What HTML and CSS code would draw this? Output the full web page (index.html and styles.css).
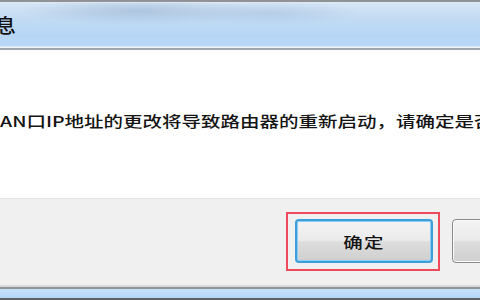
FILE: index.html
```html
<!DOCTYPE html>
<html lang="zh-CN">
<head>
<meta charset="utf-8">
<title>信息</title>
<link rel="stylesheet" href="styles.css">
</head>
<body>
<div class="window">
  <div class="frame-top"></div>
  <div class="titlebar">
    <span class="title">息</span>
  </div>
  <div class="title-sep"></div>
  <div class="content">
    <p class="message">AN口IP地址的更改将导致路由器的重新启动，请确定是否</p>
  </div>
  <div class="footer">
    <div class="highlight">
      <button class="btn btn-default"><span class="btn-label">确定</span></button>
    </div>
    <button class="btn" aria-label="取消"></button>
  </div>
  <div class="frame-bottom">
    <div class="fb-light"></div>
    <div class="fb-gray"></div>
    <div class="fb-blue"></div>
    <div class="fb-dark"></div>
  </div>
</div>
</body>
</html>
```

FILE: styles.css
```css
* { box-sizing: border-box; }
html, body {
  margin: 0;
  padding: 0;
  width: 480px;
  height: 300px;
  overflow: hidden;
  background: #ffffff;
}
body {
  font-family: "Noto Sans CJK SC", "Noto Sans", sans-serif;
  color: #1e1e1e;
}
.window {
  display: flex;
  flex-direction: column;
  width: 480px;
  height: 300px;
  overflow: hidden;
}
.frame-top {
  height: 3px;
  border-top: 2px solid #8f9397;
  background: #dfe9f3;
  flex: none;
}
.titlebar {
  height: 43px;
  flex: none;
  display: flex;
  align-items: center;
  background:
    radial-gradient(ellipse 120px 14px at 140px 8px, rgba(150,175,205,0.55), rgba(150,175,205,0) 100%),
    radial-gradient(ellipse 90px 12px at 270px 10px, rgba(160,185,215,0.45), rgba(160,185,215,0) 100%),
    linear-gradient(to bottom, #d6e6f6 0%, #c3dbf3 35%, #b7d6f6 75%, #b9d8f8 100%);
  overflow: hidden;
}
.title {
  display: inline-block;
  font-size: 19px;
  font-weight: 500;
  line-height: 22px;
  margin-left: -5px;
  transform: scaleX(1.1);
  transform-origin: left center;
  color: #111;
}
.title-sep {
  height: 4px;
  flex: none;
  border-top: 1px solid #d9e8f7;
  border-bottom: 2px solid #a1a6ab;
  background: #eef3f8;
}
.content {
  height: 148px;
  flex: none;
  background: #ffffff;
  padding-top: 61px;
  overflow: hidden;
}
.message {
  margin: 0;
  font-size: 15px;
  font-weight: 500;
  line-height: 20px;
  white-space: nowrap;
  transform: scaleX(1.3);
  transform-origin: left center;
  color: #141414;
}
.footer {
  height: 87px;
  flex: none;
  background: #f0f0f0;
  border-top: 1px solid #e4e4e4;
  display: flex;
  align-items: flex-start;
  gap: 12px;
  padding-left: 286px;
  padding-top: 13px;
  overflow: hidden;
}
.highlight {
  flex: none;
  width: 154px;
  height: 59px;
  border: 2px solid #ee4a5c;
  padding: 5px 5px 6px 7px;
}
.btn {
  flex: none;
  width: 138px;
  height: 44px;
  margin: 0;
  padding: 0;
  border: 1px solid #707070;
  border-radius: 4px;
  background: linear-gradient(to bottom, #f3f3f3 0%, #ebebeb 48%, #dddddd 52%, #cfcfcf 100%);
  box-shadow: inset 0 0 0 1px #fbfbfb;
  font-family: "Noto Sans CJK SC", sans-serif;
  font-size: 15px;
  font-weight: 500;
  color: #141414;
}
.footer > .btn {
  margin-top: 7px;
  border-color: #8a8a8a;
}
.btn-default {
  border: 2px solid #3c9fdc;
  box-shadow: inset 0 0 0 1px #86cff3;
}
.btn-label {
  display: inline-block;
  transform: scaleX(1.3);
  letter-spacing: 1px;
  margin-top: 1px;
}
.frame-bottom {
  flex: 1;
  display: flex;
  flex-direction: column;
}
.fb-light { height: 2px; background: #d9d9d9; flex: none; }
.fb-gray { height: 2px; background: #8f9498; flex: none; }
.fb-blue { flex: 1; background: linear-gradient(to bottom, #c6e0fa, #b5d6f7); }
.fb-dark { height: 2px; background: #5c6064; flex: none; }
```
